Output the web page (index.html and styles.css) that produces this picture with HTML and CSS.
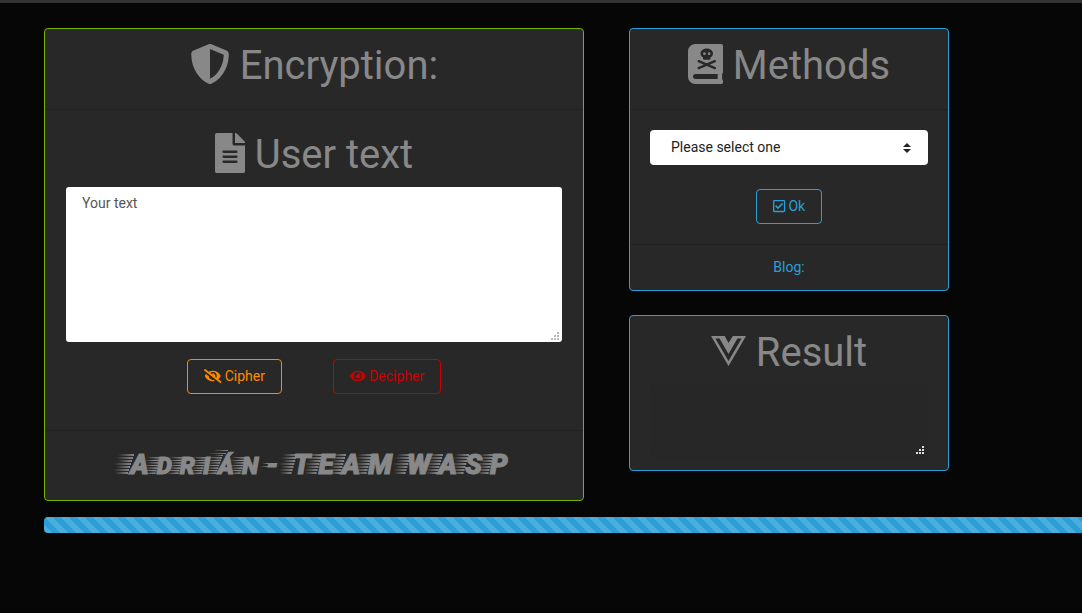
FILE: index.html
```html
<!DOCTYPE html>
<html lang="en">
<head>
<meta charset="utf-8">
<title>Encryption</title>
<link rel="stylesheet" href="styles.css">
</head>
<body>
<svg class="defs" aria-hidden="true">
  <symbol id="streak" viewBox="0 0 20 20" preserveAspectRatio="none">
    <path d="M4 1L20 0V2ZM2 4L19 3V5ZM4 7L18 6V8ZM0 10L17 9V11ZM2 13L16 12V14ZM0 16L15 15V17ZM1 19L14 18V20Z"/>
  </symbol>
  <symbol id="grip" viewBox="0 0 8 8">
    <path d="M6 0h2v2H6zM3 3h2v2H3zM6 3h2v2H6zM0 6h2v2H0zM3 6h2v2H3zM6 6h2v2H6z"/>
  </symbol>
</svg>
<header class="topbar"></header>
<main class="board">
  <section class="card card-green">
    <div class="card-header">
      <h1 class="title"><svg class="icon icon-512" viewBox="0 0 512 512"><path d="M466.5 83.7l-192-80a48.15 48.15 0 0 0-36.9 0l-192 80C27.7 91.1 16 108.6 16 128c0 198.5 114.5 335.7 221.5 380.3 11.8 4.9 25.1 4.9 36.9 0C360.1 472.6 496 349.3 496 128c0-19.4-11.7-36.9-29.5-44.3zM256.1 446.3l-.1-381 175.9 73.3c-3.3 151.4-82.1 261.1-175.8 307.7z"/></svg> Encryption:</h1>
    </div>
    <div class="card-body card-body-main">
      <h1 class="title"><label for="user-text"><svg class="icon icon-384" viewBox="0 0 384 512"><path d="M224 136V0H24C10.7 0 0 10.7 0 24v464c0 13.3 10.7 24 24 24h336c13.3 0 24-10.7 24-24V160H248c-13.2 0-24-10.8-24-24zm64 236c0 6.6-5.4 12-12 12H108c-6.6 0-12-5.4-12-12v-8c0-6.6 5.4-12 12-12h168c6.6 0 12 5.4 12 12v8zm0-64c0 6.6-5.4 12-12 12H108c-6.6 0-12-5.4-12-12v-8c0-6.6 5.4-12 12-12h168c6.6 0 12 5.4 12 12v8zm0-72v8c0 6.6-5.4 12-12 12H108c-6.6 0-12-5.4-12-12v-8c0-6.6 5.4-12 12-12h168c6.6 0 12 5.4 12 12zm96-114.1v6.1H256V0h6.1c6.4 0 12.5 2.5 17 7l97.9 98c4.5 4.5 7 10.6 7 16.9z"/></svg> User text</label></h1>
      <div class="field">
        <textarea id="user-text" class="input" placeholder="Your text"></textarea>
        <svg class="grip"><use href="#grip"/></svg>
      </div>
      <div class="actions">
        <button type="button" class="btn btn-orange"><svg class="icon icon-640" viewBox="0 0 640 512"><path d="M320 400c-75.85 0-137.25-58.71-142.9-133.11L72.2 185.82c-13.79 17.3-26.48 35.59-36.72 55.59a32.35 32.35 0 0 0 0 29.19C89.71 376.41 197.07 448 320 448c26.91 0 52.87-4 77.89-10.46L346 397.39a144.13 144.13 0 0 1-26 2.61zm313.82 58.1l-110.55-85.44a331.25 331.25 0 0 0 81.25-102.07 32.35 32.35 0 0 0 0-29.19C550.29 135.59 442.93 64 320 64a308.15 308.15 0 0 0-147.32 37.7L45.46 3.37A16 16 0 0 0 23 6.18L3.37 31.45A16 16 0 0 0 6.18 53.9l588.36 454.73a16 16 0 0 0 22.46-2.81l19.64-25.27a16 16 0 0 0-2.82-22.45zm-183.72-142l-39.3-30.38A94.75 94.75 0 0 0 416 256a94.76 94.76 0 0 0-121.31-92.21A47.65 47.65 0 0 1 304 192a46.64 46.64 0 0 1-1.54 10l-73.61-56.89A142.31 142.31 0 0 1 320 112a143.92 143.92 0 0 1 144 144c0 21.63-5.29 41.79-13.9 60.11z"/></svg> Cipher</button>
        <button type="button" class="btn btn-red"><svg class="icon icon-576" viewBox="0 0 576 512"><path d="M572.52 241.4C518.29 135.59 410.93 64 288 64S57.68 135.64 3.48 241.41a32.35 32.35 0 0 0 0 29.19C57.71 376.41 165.07 448 288 448s230.32-71.64 284.52-177.41a32.35 32.35 0 0 0 0-29.19zM288 400a144 144 0 1 1 144-144 143.93 143.93 0 0 1-144 144zm0-240a95.31 95.31 0 0 0-25.31 3.79 47.85 47.85 0 0 1-66.9 66.9A95.78 95.78 0 1 0 288 160z"/></svg> Decipher</button>
      </div>
    </div>
    <div class="card-footer">
      <h2 class="brand"><svg class="streak streak-first"><use href="#streak"/></svg>A<span class="small"><svg class="streak"><use href="#streak"/></svg>D<svg class="streak"><use href="#streak"/></svg>R<svg class="streak"><use href="#streak"/></svg>I<svg class="accent" viewBox="0 0 20 6"><path d="M4 1L20 0V1ZM0 4L18 3V4ZM6 6L15 5V6Z"/></svg><svg class="streak"><use href="#streak"/></svg>Á<svg class="streak"><use href="#streak"/></svg>N</span> <svg class="dash-streak" viewBox="0 0 8 5"><path d="M2 1L8 0V1ZM0 4L8 3V4Z"/></svg>- <svg class="streak"><use href="#streak"/></svg>T<svg class="streak"><use href="#streak"/></svg>E<svg class="streak"><use href="#streak"/></svg>A<svg class="streak"><use href="#streak"/></svg>M <svg class="streak"><use href="#streak"/></svg>W<svg class="streak"><use href="#streak"/></svg>A<svg class="streak"><use href="#streak"/></svg>S<svg class="streak"><use href="#streak"/></svg>P</h2>
    </div>
  </section>

  <div class="side">
    <section class="card card-blue">
      <div class="card-header">
        <h1 class="title"><label for="method"><svg class="icon icon-448" viewBox="0 0 448 512"><path d="M448 360V24c0-13.3-10.7-24-24-24H96C43 0 0 43 0 96v320c0 53 43 96 96 96h328c13.3 0 24-10.7 24-24v-16c0-7.5-3.5-14.3-8.9-18.7-4.2-15.4-4.2-59.3 0-74.7 5.4-4.3 8.9-11.1 8.9-18.6zM380.4 448H96c-17.7 0-32-14.3-32-32s14.3-32 32-32h284.4c-2 17-2 47 0 64z"/><path class="cutout" d="M240 56c-44 0-80 29-80 64 0 21 13 39 32 51v15c0 8 6 14 14 14h68c8 0 14-6 14-14v-15c19-12 32-30 32-51 0-35-36-64-80-64z"/><circle cx="210" cy="124" r="17"/><circle cx="270" cy="124" r="17"/><path class="bones" d="M136 220L344 308M344 220L136 308"/></svg> Methods</label></h1>
      </div>
      <div class="card-body">
        <div class="field">
          <select id="method" class="select"><option>Please select one</option></select>
          <svg class="caret" viewBox="0 0 8 10"><path d="M4 0l4 4H0zM0 6h8L4 10z"/></svg>
        </div>
        <div class="confirm">
          <button type="button" class="btn btn-blue"><svg class="icon icon-448" viewBox="0 0 448 512"><path d="M400 32H48C21.49 32 0 53.49 0 80v352c0 26.51 21.49 48 48 48h352c26.51 0 48-21.49 48-48V80c0-26.51-21.49-48-48-48zm0 400H48V80h352v352zm-35.864-241.724L191.547 361.48c-4.705 4.667-12.303 4.637-16.97-.068l-90.781-91.516c-4.667-4.705-4.637-12.303.069-16.971l22.719-22.536c4.705-4.667 12.303-4.637 16.97.069l59.792 60.277 141.352-140.216c4.705-4.667 12.303-4.637 16.97.068l22.536 22.718c4.667 4.706 4.637 12.304-.068 16.971z"/></svg> Ok</button>
        </div>
      </div>
      <div class="card-footer"><a href="#blog" class="link">Blog:</a></div>
    </section>
    <section class="card card-blue">
      <div class="result">
        <h1 class="title"><label for="result"><svg class="icon icon-448" viewBox="0 0 448 512"><path fill-rule="evenodd" d="M356.9 64.3H280l-56 88.6-48-88.6H0L224 448 448 64.3h-91.1zm-301.2 32h53.8L224 294.5 338.4 96.3h53.8L224 384.5 55.7 96.3z"/></svg> Result</label></h1>
        <div class="field">
          <textarea id="result" class="input input-dark" readonly></textarea>
          <svg class="grip grip-light"><use href="#grip"/></svg>
        </div>
      </div>
    </section>
  </div>
</main>
<div class="progress" role="progressbar" aria-label="Progress"></div>
</body>
</html>
```
FILE: styles.css
```css
*, *::before, *::after { box-sizing: border-box; }
body {
  margin: 0;
  background: #060606;
  color: #888;
  font: 14px/21px Roboto, "Liberation Sans", sans-serif;
}
svg { fill: currentColor; }
.defs { display: none; }
.topbar { height: 3px; background: #333; }
.board {
  display: grid;
  grid-template-columns: minmax(0, 27fr) minmax(0, 16fr);
  align-items: start;
  gap: 45px;
  padding: 25px 133px 16px 44px;
}
.side { display: grid; gap: 24px; }
.card {
  background: #282828;
  border: 1px solid;
  border-radius: 4px;
  text-align: center;
}
.card-green { border-color: #77b300; }
.card-blue { border-color: #2a9fd6; }
.card-header { padding: 12px 20px; border-bottom: 1px solid #212121; }
.card-body { padding: 20px; }
.card-body-main { padding-bottom: 36px; }
.card-footer { padding: 12px 20px; border-top: 1px solid #212121; }
.result { padding: 12px 20px; }
.title {
  margin: 0 0 6px;
  color: #888;
  font-size: 40px;
  font-weight: 400;
  line-height: 50px;
}
.icon {
  height: 1em;
  vertical-align: -0.125em;
  overflow: visible;
}
.icon-384 { width: 0.75em; }
.icon-448 { width: 0.875em; }
.icon-512 { width: 1em; }
.icon-576 { width: 1.125em; }
.icon-640 { width: 1.25em; }
.cutout { fill: #282828; }
.bones { fill: none; stroke: #282828; stroke-width: 30; stroke-linecap: round; }
.field { display: grid; position: relative; }
.input {
  height: 157px;
  padding: 6px 16px;
  border: 1px solid transparent;
  border-radius: 4px;
  outline: 0;
  background: #fff padding-box;
  color: #282828;
  font: inherit;
  resize: none;
}
.input::placeholder { color: #555; opacity: 1; }
.input-dark { height: 74px; background: #272727; color: #888; }
.grip {
  position: absolute;
  right: 4px;
  bottom: 3px;
  width: 8px;
  height: 8px;
  color: #bbb;
}
.grip-light { bottom: 4px; color: #ddd; }
.select {
  appearance: none;
  height: 35px;
  padding: 0 36px 0 21px;
  border: 0;
  border-radius: 4px;
  background: #fff;
  color: #222;
  font: inherit;
}
.caret {
  position: absolute;
  right: 17px;
  top: 13px;
  width: 8px;
  height: 10px;
  color: #222;
  pointer-events: none;
}
.actions { display: flex; justify-content: center; gap: 51px; margin-top: 16px; }
.confirm { display: flex; justify-content: center; margin-top: 24px; }
.btn {
  padding: 6px 16px;
  border: 1px solid;
  border-radius: 4px;
  background: transparent;
  font: inherit;
}
.btn-orange { color: #f80; }
.btn-red { color: #c00; }
.btn-blue { color: #2a9fd6; }
.link { color: #2a9fd6; text-decoration: none; }
.brand {
  margin: 0;
  padding-right: 6px;
  font-size: 28px;
  font-style: italic;
  font-weight: 900;
  line-height: 44px;
  white-space: nowrap;
  -webkit-text-stroke: 1px currentColor;
}
.brand svg { stroke: none; }
.small { font-size: 24px; }
.streak {
  width: 18px;
  height: 20px;
  margin: 0 -4px 0 -6px;
}
.streak-first { width: 20px; margin-left: 0; }
.small .streak { height: 17px; }
.accent {
  width: 20px;
  height: 6px;
  margin: 0 -18px 0 -2px;
  vertical-align: 18px;
}
.dash-streak {
  width: 8px;
  height: 5px;
  margin: 0 -2px 0 -5px;
  vertical-align: 6px;
}
.progress {
  height: 16px;
  margin-left: 44px;
  border-radius: 4px 0 0 4px;
  background: #2a9fd6 linear-gradient(45deg, rgba(255,255,255,.15) 25%, transparent 25%, transparent 50%, rgba(255,255,255,.15) 50%, rgba(255,255,255,.15) 75%, transparent 75%) 0 0 / 16px 16px;
}
```
